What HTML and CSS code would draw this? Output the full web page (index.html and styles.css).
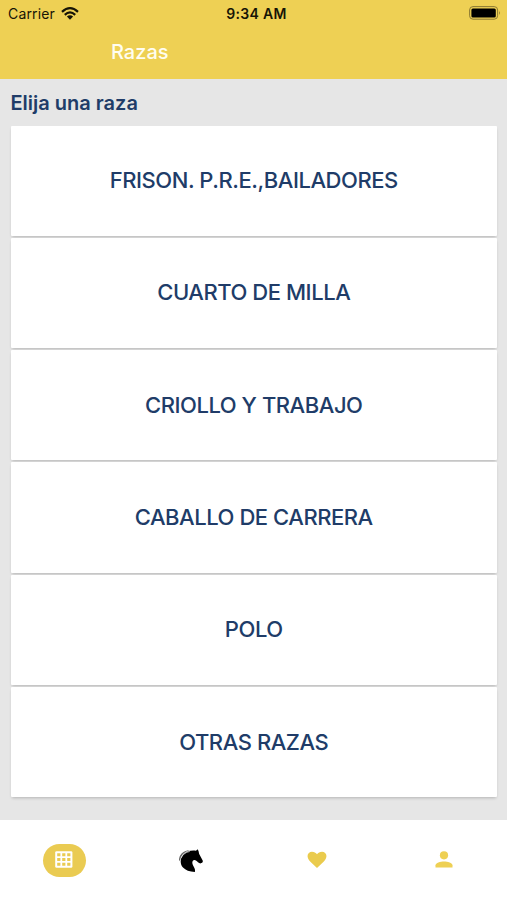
FILE: index.html
```html
<!DOCTYPE html>
<html lang="es">
<head>
<meta charset="utf-8">
<title>Razas</title>
<link rel="stylesheet" href="styles.css">
</head>
<body>
<div class="app">
  <header class="top">
    <div class="status">
      <div class="carrier"><span class="carrier-name">Carrier</span>
        <svg class="wifi" viewBox="0 0 18 13"><g fill="none" stroke="#171406" stroke-width="2.2"><path d="M1 4.9Q9-2.5 17 4.9"/><path d="M3.8 7.9Q9 3 14.2 7.9"/></g><path fill="#171406" d="M5.9 9.6Q9 6.9 12.1 9.6L9 12.8Z"/></svg>
      </div>
      <time class="clock">9:34 AM</time>
      <svg class="battery" viewBox="0 0 32 14"><rect x=".6" y=".6" width="28" height="12.6" rx="3.4" fill="none" stroke="#8b7932" stroke-width="1"/><rect x="2.4" y="2.4" width="24.4" height="9" rx="1.5" fill="#000"/><path d="M30.1 4.8q1.8 2.1 0 4.2z" fill="#8b7932"/></svg>
    </div>
    <h1 class="title">Razas</h1>
  </header>
  <main class="content">
    <h2 class="prompt">Elija una raza</h2>
    <div class="list">
      <div class="card"><span>FRISON. P.R.E.,BAILADORES</span></div>
      <div class="card"><span>CUARTO DE MILLA</span></div>
      <div class="card"><span>CRIOLLO Y TRABAJO</span></div>
      <div class="card"><span>CABALLO DE CARRERA</span></div>
      <div class="card"><span>POLO</span></div>
      <div class="card"><span>OTRAS RAZAS</span></div>
    </div>
  </main>
  <nav class="tabs">
    <div class="tab"><div class="pill"><svg class="grid-icon" viewBox="0 0 18 17"><rect x=".2" y=".2" width="17.2" height="16.6" rx="1.4" fill="#fff"/><path fill="#eacb52" d="M2.2 2.2h3.2v3H2.2zM7.2 2.2h3.2v3H7.2zM12.2 2.2h3.2v3h-3.2zM2.2 7h3.2v3H2.2zM7.2 7h3.2v3H7.2zM12.2 7h3.2v3h-3.2zM2.2 11.8h3.2v3H2.2zM7.2 11.8h3.2v3H7.2zM12.2 11.8h3.2v3h-3.2z"/></svg></div></div>
    <div class="tab"><svg class="horse" viewBox="0 0 26 24"><path d="M19.6.2L18 1.7C13.5 1 8.5 2 5.4 5.4C1.8 9.6 2 15 5 18.6C7.6 21.4 11.5 22.9 16.9 23C17.8 19.6 14.9 17.2 14.4 14.6C14 12.2 15 10.8 16.6 10.9C18.6 11.2 19.4 12.8 21.2 14C22.2 14.7 22.8 14.4 23.2 14C24.3 14.2 25 13 24.8 11.8L21.2 5Q21 2 19.6.2Z"/><path d="M1 12.2C.6 6.2 5 1.2 12.8 1.1C7.3 2.1 3.5 5.6 2.2 10.8" fill="#666"/><path d="M3 9.2C4.6 5.6 7.6 3.2 11.8 2.5" fill="none" stroke="#fff" stroke-width=".6"/></svg></div>
    <div class="tab"><svg class="heart" viewBox="0 0 20 18"><path d="M10 17L3.4 10.8C-1.9 5.4 1.1.7 5 .7c2.2 0 3.9 1 5 2.5C11.1 1.7 12.8.7 15 .7c3.9 0 6.9 4.7 1.6 10.1z" fill="#eacb4d"/></svg></div>
    <div class="tab"><svg class="person" viewBox="0 0 18 17"><circle cx="9" cy="4.3" r="4.1" fill="#eed054"/><path d="M.5 16.5v-2.2C.5 11.7 5.4 10.4 9 10.4s8.5 1.3 8.5 3.9v2.2z" fill="#eed054"/></svg></div>
  </nav>
</div>
</body>
</html>
```
FILE: styles.css
```css
* { box-sizing: border-box; }
body { margin: 0; font-family: Inter, "Liberation Sans", sans-serif; }
.app { width: 507px; height: 900px; display: flex; flex-direction: column; background: #fff; overflow: hidden; }
.top { height: 79px; background: #eed054; flex: none; }
.status { height: 27px; display: grid; grid-template-columns: 1fr auto 1fr; align-items: center; padding: 0 6px 0 8px; color: #171406; }
.carrier { display: flex; align-items: center; gap: 6.5px; font-size: 14px; letter-spacing: .15px; }
.wifi { width: 18px; height: 13px; margin-bottom: 1px; }
.clock { font-size: 14px; font-weight: 600; letter-spacing: .35px; padding-left: 4px; }
.battery { width: 32px; height: 14px; justify-self: end; margin-bottom: 1px; }
.title { margin: 0; padding: 0 0 0 111px; height: 50px; line-height: 50px; font-size: 20px; font-weight: 500; letter-spacing: 0; color: #fffdf0; }
.content { height: 741.4px; background: #e6e6e6; flex: none; padding: 0 10px 0 10.5px; }
.prompt { margin: 0; height: 46.5px; line-height: 48px; font-size: 20px; font-weight: 600; color: #203c68; }
.list { display: grid; gap: 2px; }
.card { height: 110.3px; display: flex; align-items: center; justify-content: center; padding-bottom: 1.2px; background: #fff; border-radius: 1px; box-shadow: 0 2px 3px -1px rgba(0, 0, 0, .22); color: #203c68; font-size: 22px; font-weight: 500; letter-spacing: -.45px; white-space: nowrap; }
.tabs { flex: 1; display: grid; grid-template-columns: repeat(4, 1fr); }
.tab { display: flex; justify-content: center; padding-top: 24px; }
.pill { width: 43px; height: 32.5px; border-radius: 17px; background: #eacb52; display: flex; align-items: center; justify-content: center; margin-left: 2px; }
.grid-icon { width: 18px; height: 17px; margin: 0 1px 1.5px 0; }
.horse { width: 26px; height: 24px; margin: 5px 0 0 2px; }
.heart { width: 20px; height: 18px; margin: 7px 0 0 1px; }
.person { width: 18px; height: 17px; margin-top: 7px; }
```
